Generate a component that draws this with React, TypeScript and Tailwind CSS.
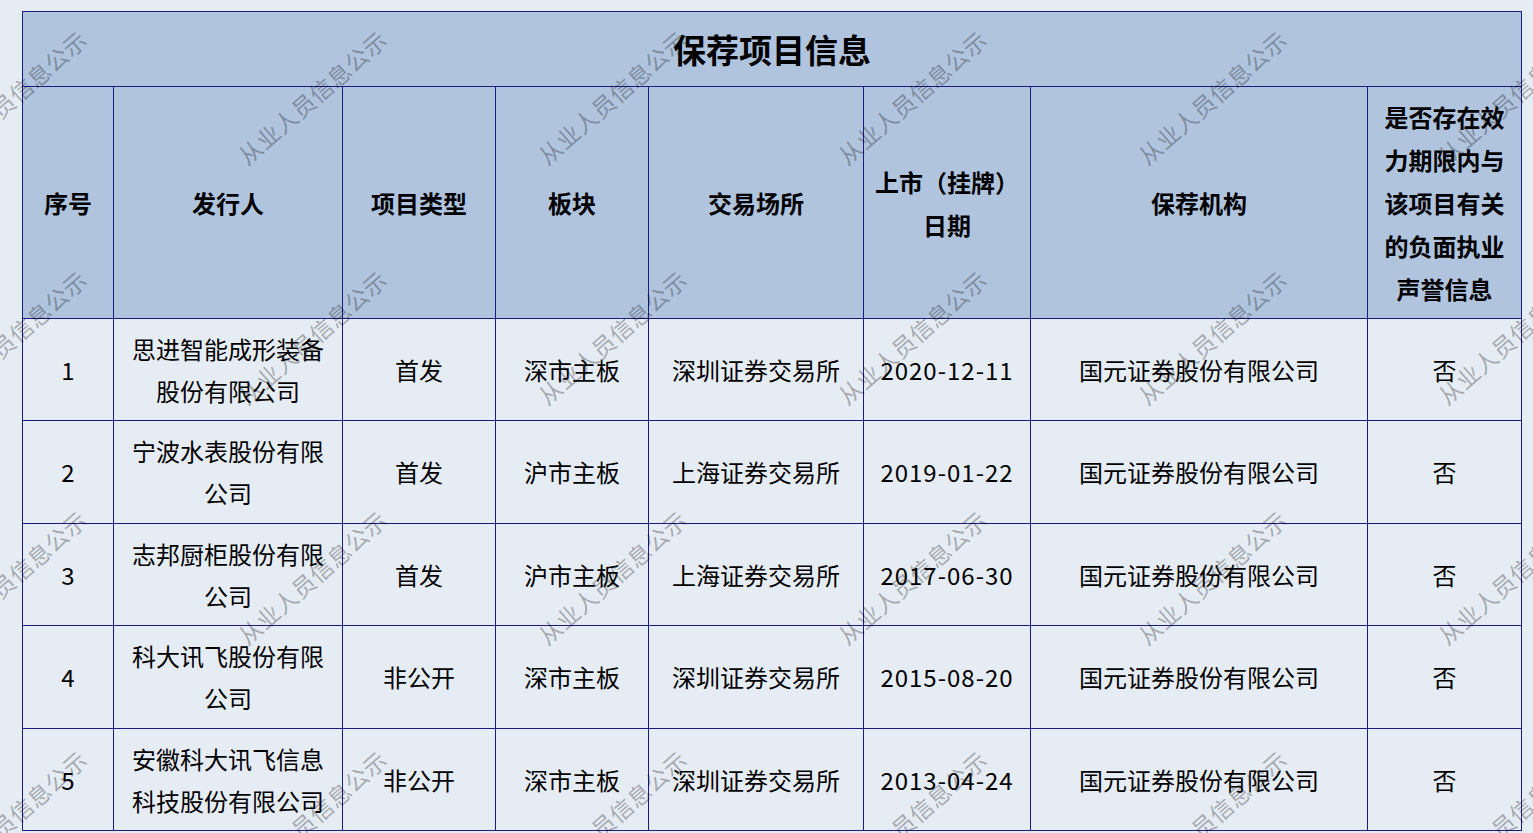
import React from "react";

const rows = [
  { no: 1, issuer: "思进智能成形装备股份有限公司", type: "首发", board: "深市主板", venue: "深圳证券交易所", date: "2020-12-11" },
  { no: 2, issuer: "宁波水表股份有限公司", type: "首发", board: "沪市主板", venue: "上海证券交易所", date: "2019-01-22" },
  { no: 3, issuer: "志邦厨柜股份有限公司", type: "首发", board: "沪市主板", venue: "上海证券交易所", date: "2017-06-30" },
  { no: 4, issuer: "科大讯飞股份有限公司", type: "非公开", board: "深市主板", venue: "深圳证券交易所", date: "2015-08-20" },
  { no: 5, issuer: "安徽科大讯飞信息科技股份有限公司", type: "非公开", board: "深市主板", venue: "深圳证券交易所", date: "2013-04-24" },
];

const headers = [
  "序号",
  "发行人",
  "项目类型",
  "板块",
  "交易场所",
  "上市（挂牌）日期",
  "保荐机构",
  "是否存在效力期限内与该项目有关的负面执业声誉信息",
];

const colWidths = [91, 229, 153, 153, 215, 167, 337, 154];

const Watermark = () => (
  <div className="pointer-events-none absolute inset-0 overflow-hidden">
    <div className="absolute left-[-138px] top-[-23px] grid grid-cols-[repeat(7,300px)] grid-rows-[repeat(5,240px)]">
      {Array.from({ length: 35 }).map((_, i) => (
        <div key={i} className="flex items-center justify-center">
          <span className="-rotate-[41deg] whitespace-nowrap text-[23px] tracking-[0.5px] text-black/30">
            从业人员信息公示
          </span>
        </div>
      ))}
    </div>
  </div>
);

export default function App() {
  return (
    <div className="relative h-[833px] overflow-hidden bg-[#e6ecf4] pl-[22px] pt-[11px] font-['Noto_Sans_CJK_SC','Noto_Sans',sans-serif] text-black">
      <table className="w-[1500px] table-fixed border-collapse">
        <colgroup>
          {colWidths.map((w, i) => (
            <col key={i} style={{ width: w }} />
          ))}
        </colgroup>
        <thead>
          <tr className="h-[75px] bg-[#b0c4de]">
            <th colSpan={8} className="border border-[#1a1a80] text-[33px] font-bold leading-[40px]">
              保荐项目信息
            </th>
          </tr>
          <tr className="h-[232px] bg-[#b0c4de]">
            {headers.map((h) => (
              <th key={h} className="border border-[#1a1a80] px-2 text-center align-middle text-[24px] font-bold leading-[43px]">
                {h}
              </th>
            ))}
          </tr>
        </thead>
        <tbody>
          {rows.map((r, i) => (
            <tr key={r.no} className={`${i % 2 === 0 ? "h-[102px]" : "h-[103px]"} bg-[#e6ecf4]`}>
              <td className="border border-[#1a1a80] text-center text-[24px] leading-[42px]">{r.no}</td>
              <td className="border border-[#1a1a80] px-4 text-center text-[24px] leading-[42px]">{r.issuer}</td>
              <td className="border border-[#1a1a80] text-center text-[24px] leading-[42px]">{r.type}</td>
              <td className="border border-[#1a1a80] text-center text-[24px] leading-[42px]">{r.board}</td>
              <td className="border border-[#1a1a80] text-center text-[24px] leading-[42px]">{r.venue}</td>
              <td className="border border-[#1a1a80] text-center text-[24px] leading-[42px] tracking-[1px]">{r.date}</td>
              <td className="border border-[#1a1a80] text-center text-[24px] leading-[42px]">国元证券股份有限公司</td>
              <td className="border border-[#1a1a80] text-center text-[24px] leading-[42px]">否</td>
            </tr>
          ))}
        </tbody>
      </table>
      <Watermark />
    </div>
  );
}
